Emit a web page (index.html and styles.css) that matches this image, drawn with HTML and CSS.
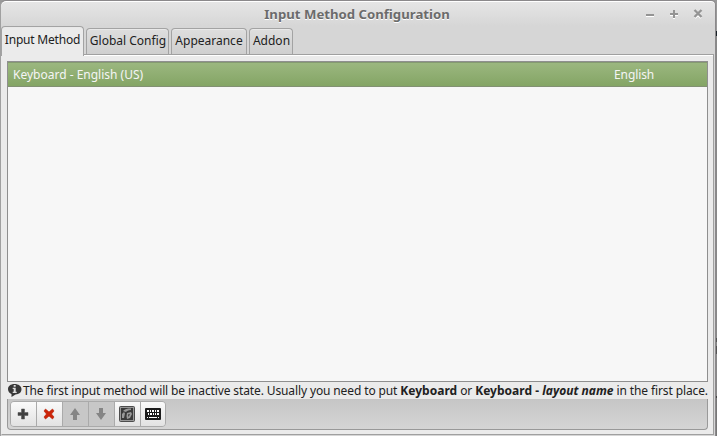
FILE: index.html
```html
<!DOCTYPE html>
<html lang="en">
<head>
<meta charset="utf-8">
<title>Input Method Configuration</title>
<link rel="stylesheet" href="styles.css">
</head>
<body>
<div class="window">
  <header class="titlebar">
    <h1 class="title">Input Method Configuration</h1>
    <svg class="controls" width="64" height="14" viewBox="0 0 64 14">
      <g fill="none" stroke="#fff" stroke-width="2" transform="translate(0 1)"><path d="M3 8h8M27 7h8M31 3v8M52 3l6 7M58 3l-6 7"/></g>
      <g fill="none" stroke="#949494" stroke-width="2"><path d="M3 8h8M27 7h8M31 3v8"/><path stroke-width="2.400" d="M51.500 3l7 7M58.500 3l-7 7"/></g>
    </svg>
  </header>
  <nav class="tabs">
    <span class="tab active">Input Method</span>
    <span class="tab global">Global Config</span>
    <span class="tab appearance">Appearance</span>
    <span class="tab addon">Addon</span>
  </nav>
  <main class="page">
    <div class="list">
      <div class="row"><span>Keyboard - English (US)</span><span class="lang">English</span></div>
    </div>
    <p class="hint">
      <svg width="15" height="15" viewBox="0 0 15 15"><path d="M7.500 1C3.500 1 1 3.200 1 6.200c0 2.200 1.500 4 3.500 4.700L4.500 14l4-2.600c3.700-.1 6-2.300 6-5.200C14.500 3.200 11.500 1 7.500 1z" fill="#383838"/><path d="M6.700 2h2v1.700h-2zM5.700 4.800h3v4h1V10h-4V8.800h1V6h-1z" fill="#ddd"/></svg><span>The first input method will be inactive state. Usually you need to put <b>Keyboard</b> or <b>Keyboard - <i>layout name</i></b> in the first place.</span>
    </p>
    <div class="toolbar">
      <div class="group">
        <button class="tool" aria-label="Add"><svg width="16" height="16" viewBox="0 0 16 16"><path d="M6.500 3h3v3.500H13v3H9.500V13h-3V9.500H3v-3h3.500z" fill="#404040" stroke="#505050" stroke-width=".5"/></svg></button>
        <button class="tool" aria-label="Remove"><svg width="16" height="16" viewBox="0 0 16 16"><path d="M4.500 3L8 6l3.500-3L13 5l-2.500 3 2.500 3-1.500 2L8 10l-3.500 3L3 11l2.500-3L3 5z" fill="#cc2408" stroke="#b51c04" stroke-width=".6"/></svg></button>
        <button class="tool off" aria-label="Move up"><svg width="16" height="16" viewBox="0 0 16 16"><path d="M8 2l5 7h-3v5H6V9H3z" fill="#858585"/></svg></button>
        <button class="tool off" aria-label="Move down"><svg width="16" height="16" viewBox="0 0 16 16"><path d="M8 14l5-7h-3V2H6v5H3z" fill="#858585"/></svg></button>
        <button class="tool" aria-label="Configure"><svg width="16" height="16" viewBox="0 0 16 16"><rect x=".5" y=".5" width="15" height="15" rx="1" fill="#999" stroke="#4d4d4d"/><rect x="2" y="2" width="12" height="12" fill="#3a3a3a"/><path d="M3 12V8l2-2 1 1.500L5 12zM4 5c2-2 4-2.500 8-2.500V4C9 4 8 5 7 6zM8 7l4-1 1 2-2 4-3 1-.5-3z" fill="#999"/><path d="M9 8.500l2-.5-1.500 3z" fill="#333"/></svg></button>
        <button class="tool" aria-label="Keyboard layout"><svg width="16" height="12" viewBox="0 0 16 12"><rect width="16" height="12" rx="1" fill="#1c1c1c"/><path d="M2 2h2v2H2zM5 2h1v2H5zM7 2h2v2H7zM10 2h1v2h-1zM12 2h2v2h-2zM3 5h1v2H3zM5 5h2v2H5zM8 5h1v2H8zM10 5h1v2h-1zM12 5h2v2h-2zM2 9h1v1H2zM4 9h8v1H4zM13 9h1v1h-1z" fill="#fff"/></svg></button>
      </div>
    </div>
  </main>
  <footer class="edge"></footer>
</div>
</body>
</html>
```
FILE: styles.css
```css
* { box-sizing: border-box; }
body { margin: 0; width: 717px; height: 436px; overflow: hidden; background: linear-gradient(#999 31px, #182026 31px 36px, #888 36px 338px, #555 338px 342px, #888 342px 346px, #555 346px 354px, #888 354px 396px, #444 396px 398px, #777 398px); font: 12px/16px "Noto Sans", sans-serif; color: #212121; }
.window { width: 716px; height: 436px; border: 1px solid #8b898b; border-left-color: #a0a0a0; border-bottom: 0; border-radius: 6px 5px 0 0; background: linear-gradient(#e6e6e6, #d6d6d6 25px); box-shadow: inset 0 1px #fff; display: flex; flex-direction: column; }
.titlebar { height: 25px; position: relative; padding-top: 5px; flex: none; }
.title { margin: 0 0 0 -2px; font-size: 13.200px; line-height: 17px; font-weight: 700; color: #6b6b6b; text-shadow: 0 1px #fff; text-align: center; }
.controls { position: absolute; left: 642px; top: 6px; }
.tabs { height: 28px; display: flex; align-items: flex-end; gap: 2px; flex: none; }
.tab { height: 26px; border: 1px solid #a3a3a3; border-bottom: 0; border-radius: 4px 4px 0 0; background: linear-gradient(#dedede, #cfcfcf); box-shadow: inset 0 1px #e9e9e9; text-align: center; line-height: 24px; white-space: nowrap; }
.tab.active { width: 83px; height: 30px; margin-bottom: -2px; background: #ebebeb; position: relative; letter-spacing: -.2px; line-height: 25px; }
.global { width: 83px; padding-left: 1px; }
.appearance { width: 76px; }
.addon { width: 44px; padding-left: 1px; }
.page { width: 713px; height: 381px; flex: none; padding: 6px 6px 0 5px; border: 1px solid #a0a0a0; border-left-color: #ebebeb; background: #ebebeb; box-shadow: inset 0 1px #fff; }
.list { width: 701px; height: 321px; border: 1px solid #8f8f8f; background: #f7f7f7; }
.row { height: 25px; padding: 0 5px; display: flex; color: #f5f5f5; line-height: 24px; background: linear-gradient(#9bb77f, #84a565); border-top: 1px solid #849a70; border-bottom: 1px solid #829173; }
.lang { margin-left: auto; width: 88px; letter-spacing: -.1px; }
.hint { margin: 0; height: 17px; display: flex; align-items: center; white-space: nowrap; letter-spacing: -.12px; }
.hint b { letter-spacing: .02px; }
.hint svg { flex: none; margin-right: 1px; }
.toolbar { width: 701px; height: 31px; border: 1px solid #999; border-top: 0; border-radius: 0 0 4px 4px; background: linear-gradient(#c6c6c6, #d5d5d5); padding: 2px; }
.group { display: flex; width: 156px; height: 26px; border: 1px solid #aaa; border-radius: 4px; overflow: hidden; }
.tool { flex: none; width: 26px; border: 0; border-right: 1px solid #aaa; padding: 0 0 0 4px; display: flex; align-items: center; justify-content: flex-start; background: linear-gradient(#fafafa, #e2e2e2); }
.tool:last-child { border-right: 0; width: 24px; }
.tool.off { background: #c7c7c7; }
.edge { flex: 1; background: #d6d6d6; }
```
